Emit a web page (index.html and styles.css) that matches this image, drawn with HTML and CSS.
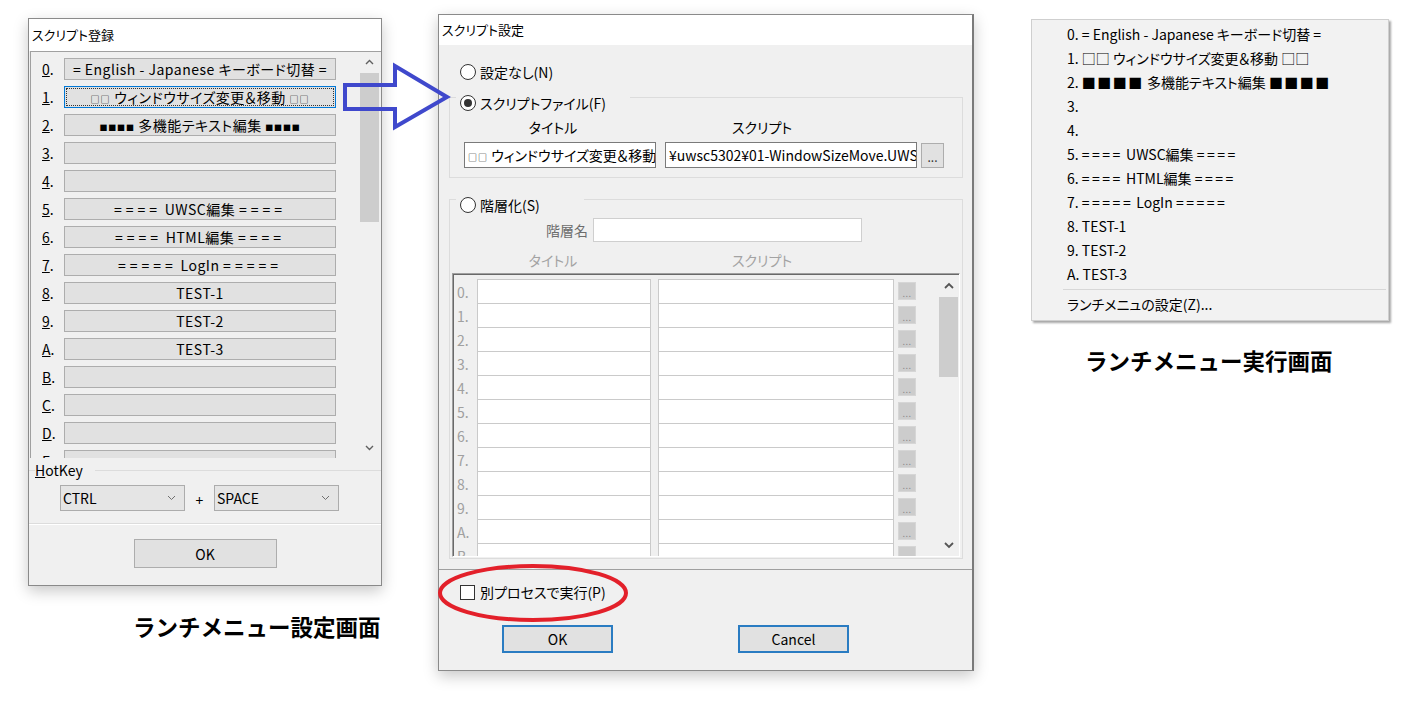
FILE: index.html
```html
<!DOCTYPE html>
<html lang="ja">
<head>
<meta charset="utf-8">
<title>ランチメニュー</title>
<link rel="stylesheet" href="styles.css">
</head>
<body>
<div class="desk">

  <section class="win reg">
    <div class="titlebar">スクリプト登録</div>
    <div class="reg-list">
      <div class="reg-rows">
        <div class="reg-row"><span class="mn"><u>0</u>.</span><span class="rbtn">= English - Japanese キーボード切替 =</span></div>
        <div class="reg-row"><span class="mn"><u>1</u>.</span><span class="rbtn focus"><span class="sq">□□</span> ウィンドウサイズ変更＆移動 <span class="sq">□□</span></span></div>
        <div class="reg-row"><span class="mn"><u>2</u>.</span><span class="rbtn"><span class="sqb">■■■■</span> 多機能テキスト編集 <span class="sqb">■■■■</span></span></div>
        <div class="reg-row"><span class="mn"><u>3</u>.</span><span class="rbtn"></span></div>
        <div class="reg-row"><span class="mn"><u>4</u>.</span><span class="rbtn"></span></div>
        <div class="reg-row"><span class="mn"><u>5</u>.</span><span class="rbtn"><span class="eq">====</span> UWSC編集 <span class="eq">====</span></span></div>
        <div class="reg-row"><span class="mn"><u>6</u>.</span><span class="rbtn"><span class="eq">====</span> HTML編集 <span class="eq">====</span></span></div>
        <div class="reg-row"><span class="mn"><u>7</u>.</span><span class="rbtn"><span class="eq">=====</span> LogIn <span class="eq">=====</span></span></div>
        <div class="reg-row"><span class="mn"><u>8</u>.</span><span class="rbtn">TEST-1</span></div>
        <div class="reg-row"><span class="mn"><u>9</u>.</span><span class="rbtn">TEST-2</span></div>
        <div class="reg-row"><span class="mn"><u>A</u>.</span><span class="rbtn">TEST-3</span></div>
        <div class="reg-row"><span class="mn"><u>B</u>.</span><span class="rbtn"></span></div>
        <div class="reg-row"><span class="mn"><u>C</u>.</span><span class="rbtn"></span></div>
        <div class="reg-row"><span class="mn"><u>D</u>.</span><span class="rbtn"></span></div>
        <div class="reg-row"><span class="mn"><u>E</u>.</span><span class="rbtn"></span></div>
      </div>
      <div class="vscroll v1">
        <div class="arr"><svg width="9" height="6" viewBox="0 0 9 6"><path d="M1 5 L4.5 1.5 L8 5" fill="none" stroke="#606060" stroke-width="1.4"/></svg></div>
        <div class="thumb t1"></div>
        <div class="vfill"></div>
        <div class="arr"><svg width="9" height="6" viewBox="0 0 9 6"><path d="M1 1 L4.5 4.5 L8 1" fill="none" stroke="#606060" stroke-width="1.4"/></svg></div>
      </div>
    </div>
    <div class="hotkey">
      <div class="hk-legend"><span class="hk-l"></span><span class="hk-t"><u>H</u>otKey</span><span class="hk-r"></span></div>
      <div class="hk-row">
        <div class="combo"><span>CTRL</span><svg width="9" height="6" viewBox="0 0 9 6"><path d="M1 1 L4.5 4.5 L8 1" fill="none" stroke="#707070" stroke-width="1"/></svg></div>
        <span class="plus">+</span>
        <div class="combo"><span>SPACE</span><svg width="9" height="6" viewBox="0 0 9 6"><path d="M1 1 L4.5 4.5 L8 1" fill="none" stroke="#707070" stroke-width="1"/></svg></div>
      </div>
    </div>
    <div class="reg-foot"><div class="btn plain">OK</div></div>
  </section>

  <section class="win set">
    <div class="titlebar t2">スクリプト設定</div>
    <div class="set-body">
      <div class="radio-row"><span class="radio"></span><span>設定なし(N)</span></div>
      <fieldset class="grp g1">
        <legend class="lg lg1"><span class="radio on"></span><span>スクリプトファイル(F)</span></legend>
        <div class="cols heads"><span class="h-title">タイトル</span><span class="h-script">スクリプト</span></div>
        <div class="cols inputs">
          <div class="field f-title"><span class="sq">□□</span> ウィンドウサイズ変更＆移動</div>
          <div class="field f-script">¥uwsc5302¥01-WindowSizeMove.UWS</div>
          <div class="dots">...</div>
        </div>
      </fieldset>
      <fieldset class="grp g2">
        <legend class="lg lg2"><span class="radio"></span><span>階層化(S)</span></legend>
        <div class="layer-row"><span class="layer-lbl">階層名</span><div class="field f-layer"></div></div>
        <div class="cols heads dim"><span class="h-title">タイトル</span><span class="h-script">スクリプト</span></div>
        <div class="sublist">
          <div class="sub-rows">
            <div class="sub-row"><span class="sub-mn">0.</span><div class="sfield st"></div><div class="sfield ss"></div><div class="mini">...</div></div>
            <div class="sub-row"><span class="sub-mn">1.</span><div class="sfield st"></div><div class="sfield ss"></div><div class="mini">...</div></div>
            <div class="sub-row"><span class="sub-mn">2.</span><div class="sfield st"></div><div class="sfield ss"></div><div class="mini">...</div></div>
            <div class="sub-row"><span class="sub-mn">3.</span><div class="sfield st"></div><div class="sfield ss"></div><div class="mini">...</div></div>
            <div class="sub-row"><span class="sub-mn">4.</span><div class="sfield st"></div><div class="sfield ss"></div><div class="mini">...</div></div>
            <div class="sub-row"><span class="sub-mn">5.</span><div class="sfield st"></div><div class="sfield ss"></div><div class="mini">...</div></div>
            <div class="sub-row"><span class="sub-mn">6.</span><div class="sfield st"></div><div class="sfield ss"></div><div class="mini">...</div></div>
            <div class="sub-row"><span class="sub-mn">7.</span><div class="sfield st"></div><div class="sfield ss"></div><div class="mini">...</div></div>
            <div class="sub-row"><span class="sub-mn">8.</span><div class="sfield st"></div><div class="sfield ss"></div><div class="mini">...</div></div>
            <div class="sub-row"><span class="sub-mn">9.</span><div class="sfield st"></div><div class="sfield ss"></div><div class="mini">...</div></div>
            <div class="sub-row"><span class="sub-mn">A.</span><div class="sfield st"></div><div class="sfield ss"></div><div class="mini">...</div></div>
            <div class="sub-row"><span class="sub-mn">B.</span><div class="sfield st"></div><div class="sfield ss"></div><div class="mini">...</div></div>
          </div>
          <div class="vscroll v2">
            <div class="arr a2"><svg width="10" height="7" viewBox="0 0 10 7"><path d="M1 6 L5 2 L9 6" fill="none" stroke="#555" stroke-width="1.8"/></svg></div>
            <div class="thumb t2b"></div>
            <div class="vfill"></div>
            <div class="arr a2"><svg width="10" height="7" viewBox="0 0 10 7"><path d="M1 1 L5 5 L9 1" fill="none" stroke="#555" stroke-width="1.8"/></svg></div>
          </div>
        </div>
      </fieldset>
    </div>
    <div class="set-foot">
      <div class="check-row"><span class="check"></span><span>別プロセスで実行(P)</span></div>
      <div class="btn-row"><div class="btn def">OK</div><div class="btn def">Cancel</div></div>
    </div>
  </section>

  <nav class="win menu">
    <div class="mi">0. = English - Japanese キーボード切替 =</div>
    <div class="mi">1. □□ ウィンドウサイズ変更＆移動 □□</div>
    <div class="mi">2. <span class="msq">■■■■</span> 多機能テキスト編集 <span class="msq">■■■■</span></div>
    <div class="mi">3.</div>
    <div class="mi">4.</div>
    <div class="mi">5. <span class="meq">====</span> UWSC編集 <span class="meq">====</span></div>
    <div class="mi">6. <span class="meq">====</span> HTML編集 <span class="meq">====</span></div>
    <div class="mi">7. <span class="meq">=====</span> LogIn <span class="meq">=====</span></div>
    <div class="mi">8. TEST-1</div>
    <div class="mi">9. TEST-2</div>
    <div class="mi">A. TEST-3</div>
    <div class="msep"></div>
    <div class="mi">ランチメニュの設定(Z)...</div>
  </nav>

  <div class="cap cap1">ランチメニュー設定画面</div>
  <div class="cap cap2">ランチメニュー実行画面</div>

  <svg class="arrow" width="120" height="76" viewBox="0 0 120 76">
    <polygon points="7,27 57,27 57,8 109,39 57,69 57,51 7,51" fill="none" stroke="#3f48cc" stroke-width="4" stroke-linejoin="miter"/>
  </svg>
  <svg class="ring" width="200" height="64" viewBox="0 0 200 64">
    <ellipse cx="99" cy="30" rx="93" ry="27" fill="none" stroke="#e3202a" stroke-width="4"/>
  </svg>
</div>
</body>
</html>
```

FILE: styles.css
```css
html, body {
  margin: 0;
  padding: 0;
  background: #ffffff;
}

body {
  font-family: "Noto Sans CJK JP", "Noto Sans", sans-serif;
  font-feature-settings: "palt";
  color: #000;
}

.desk {
  position: relative;
  width: 1407px;
  height: 707px;
  overflow: hidden;
  background: #fff;
}

/* ---------- windows ---------- */
.win {
  position: absolute;
  box-sizing: border-box;
  background: #f0f0f0;
  border: 1px solid #8a8a8a;
  box-shadow: 0 5px 14px rgba(0, 0, 0, 0.22);
  display: flex;
  flex-direction: column;
  font-size: 14px;
  line-height: 16px;
}

.reg {
  left: 28px;
  top: 18px;
  width: 354px;
  height: 568px;
}

.set {
  left: 438px;
  top: 14px;
  width: 536px;
  height: 657px;
  border-right: 2px solid #7a7a7a;
}

.menu {
  left: 1031px;
  top: 19px;
  width: 358px;
  height: 302px;
  border: 1px solid #cfcfcf;
  background: #f2f2f2;
  box-shadow: 2px 2px 2px rgba(0, 0, 0, 0.35);
  padding-top: 2px;
  font-size: 14px;
}

.titlebar {
  flex: none;
  background: #fff;
  height: 32px;
  line-height: 32px;
  padding-left: 3px;
  white-space: nowrap;
  font-size: 13px;
}

.titlebar.t2 {
  height: 30px;
  line-height: 30px;
}

/* ---------- left dialog: list ---------- */
.reg-list {
  flex: none;
  height: 406px;
  margin-left: 1px;
  border-left: 1px solid #a0a0a0;
  border-top: 1px solid #a0a0a0;
  display: flex;
  overflow: hidden;
}

.reg-rows {
  flex: 1;
  padding: 6px 0 0 11px;
  display: flex;
  flex-direction: column;
  gap: 6px;
  overflow: hidden;
}

.reg-row {
  flex: none;
  display: flex;
  align-items: center;
  height: 22px;
}

.mn {
  width: 22px;
  flex: none;
}

.rbtn {
  flex: none;
  width: 272px;
  height: 22px;
  box-sizing: border-box;
  border: 1px solid #adadad;
  background: #e1e1e1;
  text-align: center;
  line-height: 20px;
  letter-spacing: 0.5px;
  white-space: nowrap;
  overflow: hidden;
}

.rbtn.focus {
  border-color: #0078d7;
  outline: 1px dotted #333;
  outline-offset: -3px;
}

.sq {
  font-size: 9px;
  letter-spacing: 1px;
}

.sqb {
  font-size: 8px;
  letter-spacing: 0.8px;
}

.eq {
  letter-spacing: 4px;
}

.meq {
  letter-spacing: 2.5px;
}

.msq {
  letter-spacing: 1.5px;
}

.vscroll {
  flex: none;
  width: 19px;
  display: flex;
  flex-direction: column;
}

.v1 {
  margin-right: 2px;
}

.arr {
  flex: none;
  height: 20px;
  display: flex;
  align-items: center;
  justify-content: center;
}

.thumb {
  flex: none;
  background: #cdcdcd;
}

.t1 {
  margin-top: 1px;
  height: 149px;
}

.vfill {
  flex: 1;
}

/* ---------- left dialog: hotkey ---------- */
.hotkey {
  flex: none;
  padding-top: 4px;
  border-bottom: 1px solid #dcdcdc;
  box-shadow: 0 1px 0 #fff;
  height: 66px;
  box-sizing: border-box;
}

.hk-legend {
  display: flex;
  align-items: center;
  height: 16px;
}

.hk-l {
  width: 6px;
  height: 1px;
  background: #dcdcdc;
}

.hk-t {
  padding: 0 12px 0 0;
}

.hk-r {
  flex: 1;
  height: 1px;
  background: #dcdcdc;
}

.hk-row {
  display: flex;
  align-items: center;
  margin-top: 7px;
  padding-left: 31px;
}

.combo {
  width: 125px;
  height: 26px;
  box-sizing: border-box;
  border: 1px solid #acacac;
  background: #e5e5e5;
  display: flex;
  align-items: center;
  justify-content: space-between;
  padding: 0 8px 0 2px;
}

.plus {
  width: 29px;
  text-align: center;
  padding-top: 4px;
}

.reg-foot {
  display: flex;
  justify-content: center;
  padding-top: 15px;
}

.btn {
  box-sizing: border-box;
  background: #e1e1e1;
  text-align: center;
  display: flex;
  align-items: center;
  justify-content: center;
}

.btn.plain {
  width: 143px;
  height: 29px;
  border: 1px solid #adadad;
}

.btn.def {
  width: 111px;
  height: 28px;
  border: 2px solid #2a7cc2;
}

/* ---------- middle dialog ---------- */
.set-body {
  flex: none;
  padding-top: 18px;
}

.radio-row {
  display: flex;
  align-items: center;
  gap: 4px;
  height: 18px;
  padding-left: 21px;
}

.radio {
  flex: none;
  width: 16px;
  height: 16px;
  box-sizing: border-box;
  border: 1px solid #333;
  border-radius: 50%;
  background: #fff;
  display: flex;
  align-items: center;
  justify-content: center;
}

.radio.on::after {
  content: "";
  width: 8px;
  height: 8px;
  border-radius: 50%;
  background: #333;
}

.grp {
  border: 1px solid #dcdcdc;
  margin: 2px 9px 0 10px;
  padding: 0 0 9px 0;
  min-width: 0;
}

.g2 {
  margin-top: 7px;
  padding-bottom: 1px;
}

.lg {
  margin-left: 6px;
  padding: 0 0 0 4px;
  height: 28px;
  box-sizing: border-box;
  display: flex;
  align-items: flex-end;
  gap: 4px;
  white-space: nowrap;
}

.lg1 {
  width: 174px;
}

.lg2 {
  width: 128px;
}

.cols {
  display: flex;
  padding-left: 14px;
}

.heads {
  margin-top: 8px;
  height: 16px;
}

.heads.dim {
  margin-top: 10px;
  color: #a3a3a3;
}

.h-title {
  width: 192px;
  box-sizing: border-box;
  text-align: center;
  padding-right: 14px;
}

.h-script {
  width: 252px;
  margin-left: 9px;
  box-sizing: border-box;
  text-align: center;
  padding-right: 58px;
}

.inputs {
  margin-top: 7px;
  align-items: flex-start;
}

.field {
  box-sizing: border-box;
  height: 26px;
  border: 1px solid #7a7a7a;
  background: #fff;
  line-height: 24px;
  padding: 0 3px;
  white-space: nowrap;
  overflow: hidden;
}

.f-title {
  width: 192px;
}

.f-script {
  width: 252px;
  margin-left: 9px;
}

.dots {
  width: 23px;
  height: 25px;
  margin: 1px 0 0 4px;
  box-sizing: border-box;
  border: 1px solid #adadad;
  background: #e1e1e1;
  text-align: center;
  line-height: 26px;
  font-size: 12px;
  color: #333;
}

.layer-row {
  display: flex;
  align-items: center;
  margin-top: 5px;
}

.layer-lbl {
  width: 138px;
  text-align: right;
  margin-right: 5px;
  color: #6d6d6d;
}

.f-layer {
  width: 269px;
  height: 24px;
  border-color: #cfcfcf;
}

.sublist {
  margin: 5px 2px 0 2px;
  height: 284px;
  box-sizing: border-box;
  border: 1px solid;
  border-color: #a0a0a0 #ffffff #ffffff #a0a0a0;
  box-shadow: inset 1px 1px 0 #696969;
  display: flex;
  overflow: hidden;
}

.sub-rows {
  flex: 1;
  padding: 5px 0 0 4px;
  overflow: hidden;
}

.sub-row {
  display: flex;
  height: 24px;
}

.sub-mn {
  width: 20px;
  flex: none;
  color: #a0a0a0;
  line-height: 26px;
}

.sfield {
  box-sizing: border-box;
  height: 25px;
  background: #fff;
  border: 1px solid #cacaca;
  flex: none;
}

.st {
  width: 174px;
}

.ss {
  width: 236px;
  margin-left: 7px;
}

.mini {
  flex: none;
  width: 18px;
  height: 18px;
  margin: 3px 0 0 4px;
  box-sizing: border-box;
  border: 1px solid #d6d6d6;
  background: #cccccc;
  color: #8c8c8c;
  font-size: 9px;
  line-height: 22px;
  text-align: center;
  letter-spacing: 0.5px;
}

.v2 {
  margin-right: 1px;
}

.a2 {
  height: 22px;
}

.t2b {
  margin-top: 1px;
  height: 80px;
}

.set-foot {
  flex: none;
  margin-top: 10px;
  border-top: 1px solid #a0a0a0;
}

.check-row {
  display: flex;
  align-items: center;
  gap: 5px;
  height: 16px;
  margin-top: 14px;
  padding-left: 21px;
}

.check {
  width: 15px;
  height: 15px;
  box-sizing: border-box;
  border: 1px solid #333;
  background: #fff;
}

.btn-row {
  display: flex;
  gap: 125px;
  margin-top: 25px;
  padding-left: 63px;
}

/* ---------- launch menu ---------- */
.mi {
  height: 24px;
  line-height: 24px;
  padding-left: 35px;
  white-space: nowrap;
}

.msep {
  height: 1px;
  background: #d7d7d7;
  margin: 3px 2px 2px 31px;
}

/* ---------- captions / overlays ---------- */
.cap {
  position: absolute;
  font-weight: 700;
  font-size: 22.5px;
  line-height: 28px;
  white-space: nowrap;
  font-feature-settings: normal;
}

.cap1 {
  left: 133px;
  top: 612px;
}

.cap2 {
  left: 1085px;
  top: 346px;
}

.arrow {
  position: absolute;
  left: 338px;
  top: 58px;
}

.ring {
  position: absolute;
  left: 434px;
  top: 563px;
}
```
